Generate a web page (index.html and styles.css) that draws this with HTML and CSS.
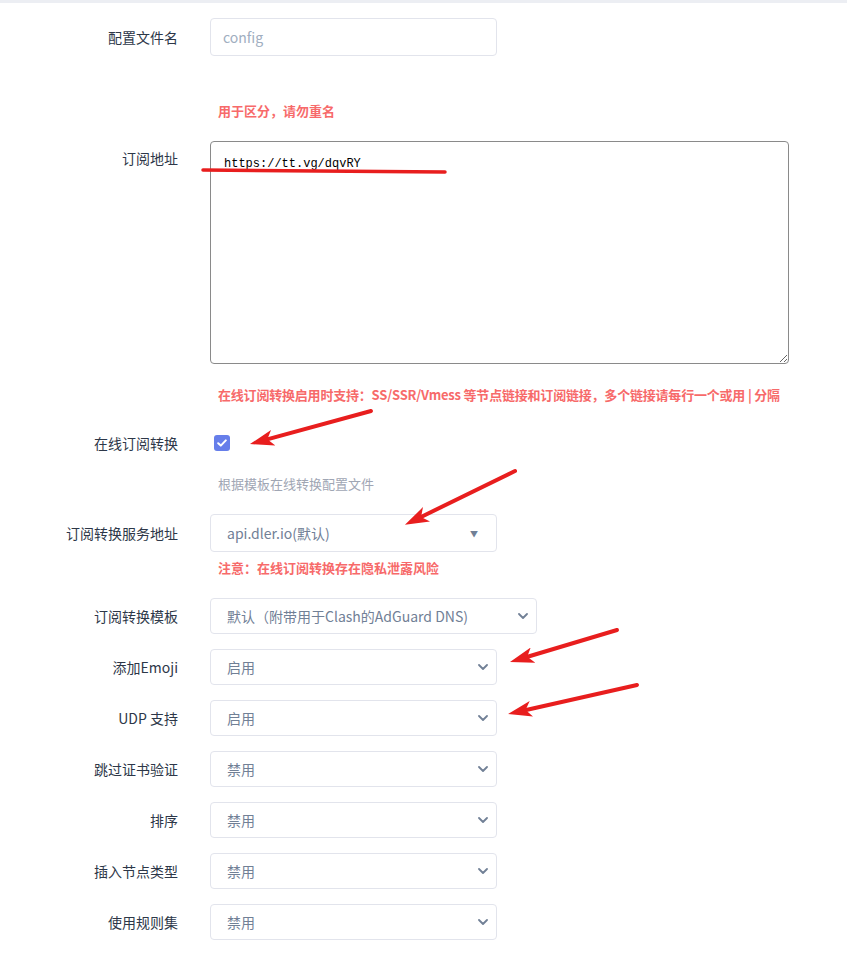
FILE: index.html
```html
<!DOCTYPE html>
<html lang="zh">
<head>
<meta charset="utf-8">
<link rel="stylesheet" href="styles.css">
</head>
<body>
<div class="topbar"></div>
<form class="form">
  <div class="row r-name">
    <label class="label">配置文件名</label>
    <div class="input w287"><span class="placeholder">config</span></div>
  </div>
  <div class="hint red h1">用于区分，请勿重名</div>

  <div class="row r-url">
    <label class="label lt">订阅地址</label>
    <textarea class="textarea">https://tt.vg/dqvRY</textarea>
  </div>
  <div class="hint red h2 tight">在线订阅转换启用时支持：SS/SSR/Vmess 等节点链接和订阅链接，多个链接请每行一个或用 | 分隔</div>

  <div class="row r-check">
    <label class="label">在线订阅转换</label>
    <span class="checkbox"><svg width="10" height="8" viewBox="0 0 10 8"><path d="M1.2 4.2 L3.8 6.6 L8.8 1.4" fill="none" stroke="#fff" stroke-width="2" stroke-linecap="round" stroke-linejoin="round"/></svg></span>
  </div>
  <div class="hint gray h3">根据模板在线转换配置文件</div>

  <div class="row r-api">
    <label class="label">订阅转换服务地址</label>
    <div class="select w287 tall"><span>api.dler.io(默认)</span><span class="tri">▼</span></div>
  </div>
  <div class="hint red h4">注意：在线订阅转换存在隐私泄露风险</div>

  <div class="row r-tpl">
    <label class="label">订阅转换模板</label>
    <div class="select w327"><span>默认（附带用于Clash的AdGuard DNS)</span><svg class="chev" width="10" height="6" viewBox="0 0 10 6"><path d="M1 1 L5 5 L9 1" fill="none" stroke="#718096" stroke-width="1.8" stroke-linecap="round" stroke-linejoin="round"/></svg></div>
  </div>
  <div class="row r-opt">
    <label class="label">添加Emoji</label>
    <div class="select w287"><span>启用</span><svg class="chev" width="10" height="6" viewBox="0 0 10 6"><path d="M1 1 L5 5 L9 1" fill="none" stroke="#718096" stroke-width="1.8" stroke-linecap="round" stroke-linejoin="round"/></svg></div>
  </div>
  <div class="row r-opt">
    <label class="label">UDP 支持</label>
    <div class="select w287"><span>启用</span><svg class="chev" width="10" height="6" viewBox="0 0 10 6"><path d="M1 1 L5 5 L9 1" fill="none" stroke="#718096" stroke-width="1.8" stroke-linecap="round" stroke-linejoin="round"/></svg></div>
  </div>
  <div class="row r-opt">
    <label class="label">跳过证书验证</label>
    <div class="select w287"><span>禁用</span><svg class="chev" width="10" height="6" viewBox="0 0 10 6"><path d="M1 1 L5 5 L9 1" fill="none" stroke="#718096" stroke-width="1.8" stroke-linecap="round" stroke-linejoin="round"/></svg></div>
  </div>
  <div class="row r-opt">
    <label class="label">排序</label>
    <div class="select w287"><span>禁用</span><svg class="chev" width="10" height="6" viewBox="0 0 10 6"><path d="M1 1 L5 5 L9 1" fill="none" stroke="#718096" stroke-width="1.8" stroke-linecap="round" stroke-linejoin="round"/></svg></div>
  </div>
  <div class="row r-opt">
    <label class="label">插入节点类型</label>
    <div class="select w287"><span>禁用</span><svg class="chev" width="10" height="6" viewBox="0 0 10 6"><path d="M1 1 L5 5 L9 1" fill="none" stroke="#718096" stroke-width="1.8" stroke-linecap="round" stroke-linejoin="round"/></svg></div>
  </div>
  <div class="row r-opt">
    <label class="label">使用规则集</label>
    <div class="select w287"><span>禁用</span><svg class="chev" width="10" height="6" viewBox="0 0 10 6"><path d="M1 1 L5 5 L9 1" fill="none" stroke="#718096" stroke-width="1.8" stroke-linecap="round" stroke-linejoin="round"/></svg></div>
  </div>
</form>

<svg class="annot" width="847" height="962" viewBox="0 0 847 962">
  <defs>
    <marker id="ah" viewBox="0 0 24 16" refX="10" refY="8" markerWidth="24" markerHeight="16" markerUnits="userSpaceOnUse" orient="auto">
      <path d="M0 0 L24 8 L0 16 L6 8 Z" fill="#e81e1e"/>
    </marker>
  </defs>
  <path d="M203 170 L445 172" stroke="#e81e1e" stroke-width="3.5" stroke-linecap="round" fill="none"/>
  <line x1="371" y1="411" x2="263.5" y2="440.4" stroke="#e81e1e" stroke-width="4" stroke-linecap="round" marker-end="url(#ah)"/>
  <line x1="515" y1="471" x2="417.5" y2="518.7" stroke="#e81e1e" stroke-width="4" stroke-linecap="round" marker-end="url(#ah)"/>
  <line x1="617" y1="630" x2="523.4" y2="658" stroke="#e81e1e" stroke-width="4" stroke-linecap="round" marker-end="url(#ah)"/>
  <line x1="637" y1="685" x2="521.7" y2="711" stroke="#e81e1e" stroke-width="4" stroke-linecap="round" marker-end="url(#ah)"/>
</svg>
</body>
</html>
```

FILE: styles.css
```css
html, body {
  margin: 0;
  padding: 0;
  background: #fff;
}
body {
  position: relative;
  width: 847px;
  height: 962px;
  overflow: hidden;
  font-family: "Noto Sans CJK SC", "Noto Sans", sans-serif;
  font-size: 14px;
  color: #2d3748;
}
.topbar {
  height: 3px;
  background: #eceef3;
}
.form {
  display: flex;
  flex-direction: column;
  padding-top: 15px;
}
.row {
  display: flex;
  align-items: center;
  gap: 32px;
}
.label {
  width: 178px;
  flex: none;
  text-align: right;
  font-size: 14px;
  line-height: 20px;
  color: #2d3748;
}
.r-url {
  align-items: flex-start;
  margin-top: 20px;
}
.label.lt {
  padding-top: 7px;
}
.input, .select {
  box-sizing: border-box;
  height: 36px;
  border: 1px solid #e2e4ec;
  border-radius: 4px;
  background: #fff;
  display: flex;
  align-items: center;
}
.input {
  height: 38px;
  padding-left: 12px;
}
.placeholder {
  color: #a0aec0;
  font-size: 14px;
}
.w287 { width: 287px; }
.w327 { width: 327px; }
.select {
  padding-left: 16px;
  padding-right: 8px;
  justify-content: space-between;
  color: #718096;
  font-size: 14px;
}
.select.tall {
  height: 38px;
  padding-right: 18px;
}
.tri {
  font-size: 8px;
  color: #718096;
}
.chev {
  flex: none;
}
.textarea {
  box-sizing: border-box;
  width: 579px;
  height: 223px;
  margin: 0;
  border: 1px solid #8a8a8a;
  border-radius: 4px;
  padding: 14px 13px;
  font-family: "Liberation Mono", monospace;
  font-size: 12px;
  line-height: 16px;
  color: #000;
  resize: vertical;
  outline: none;
}
.hint {
  margin-left: 218px;
  font-size: 13px;
  line-height: 20px;
}
.hint.red {
  color: #f76a6a;
  font-weight: 700;
}
.hint.tight {
  letter-spacing: -0.2px;
}
.hint.gray {
  color: #a0a6b4;
}
.h1 { margin-top: 45px; }
.h2 { margin-top: 21px; }
.r-check {
  margin-top: 28px;
}
.checkbox {
  width: 16px;
  height: 16px;
  margin-left: 4px;
  border-radius: 3px;
  background: #667eea;
  display: flex;
  align-items: center;
  justify-content: center;
}
.h3 { margin-top: 21px; }
.r-api { margin-top: 20px; }
.h4 { margin-top: 6px; }
.r-tpl { margin-top: 20px; }
.r-opt { margin-top: 15px; }
.annot {
  position: absolute;
  left: 0;
  top: 0;
  pointer-events: none;
}
```
